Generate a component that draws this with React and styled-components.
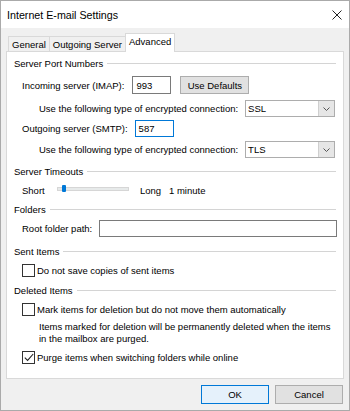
import React from "react";
import styled, { createGlobalStyle } from "styled-components";

const GlobalStyle = createGlobalStyle`
  html, body {
    margin: 0;
    padding: 0;
    background: #ffffff;
  }
  body {
    font-family: "Liberation Sans", Arial, sans-serif;
    font-size: 9.5px;
    color: #000;
  }
  * {
    box-sizing: border-box;
  }
`;

const Window = styled.div`
  width: 350px;
  height: 411px;
  border: 1px solid #aaaaaa;
  background: #f0f0f0;
  display: flex;
  flex-direction: column;
`;

const TitleBar = styled.div`
  height: 27px;
  background: #ffffff;
  display: flex;
  align-items: center;
  justify-content: space-between;
  padding: 0 7px 0 6px;
  font-size: 10.7px;
`;

const Body = styled.div`
  flex: 1;
  display: flex;
  flex-direction: column;
  padding: 0 5px;
`;

const TabStrip = styled.div`
  display: flex;
  align-items: flex-end;
  height: 18px;
  margin-top: 5px;
  padding-left: 2px;
  position: relative;
  z-index: 1;
`;

const Tab = styled.div`
  height: ${(p) => (p.$active ? "19px" : "15px")};
  margin-bottom: ${(p) => (p.$active ? "-1px" : "0")};
  padding: ${(p) => (p.$active ? "2px 3px 0" : "1px 3px 0")};
  background: ${(p) => (p.$active ? "#ffffff" : "#f0f0f0")};
  border: 1px solid #d9d9d9;
  border-bottom: none;
  margin-left: ${(p) => (p.$first ? "0" : "-1px")};
  display: flex;
  align-items: ${(p) => (p.$active ? "flex-start" : "center")};
  line-height: 12px;
`;

const Panel = styled.div`
  height: 328px;
  background: #ffffff;
  border: 1px solid #d9d9d9;
  padding: 3px 7px 0;
  display: flex;
  flex-direction: column;
`;

const Heading = styled.div`
  height: 16px;
  margin-top: ${(p) => p.$mt ?? 0}px;
  display: flex;
  align-items: center;
  gap: 4px;
  &::after {
    content: "";
    flex: 1;
    height: 1px;
    background: #d4d4d4;
  }
`;

const Row = styled.div`
  height: ${(p) => p.$h ?? 16}px;
  margin-top: ${(p) => p.$mt ?? 0}px;
  margin-left: ${(p) => p.$indent ?? 8}px;
  display: flex;
  align-items: center;
  gap: ${(p) => p.$gap ?? 7}px;
  white-space: nowrap;
`;

const TextBox = styled.div`
  width: ${(p) => (p.$w ? `${p.$w}px` : "auto")};
  flex: ${(p) => (p.$w ? "none" : "1")};
  height: ${(p) => p.$h ?? 17}px;
  border: 1px solid ${(p) => (p.$focus ? "#0078d7" : "#7a7a7a")};
  background: #fff;
  padding-left: 3px;
  display: flex;
  align-items: center;
  margin-right: ${(p) => (p.$w ? "0" : "-1px")};
`;

const Button = styled.div`
  width: ${(p) => p.$w ?? 68}px;
  height: ${(p) => p.$h ?? 19}px;
  background: ${(p) => (p.$default ? "#e5f1fb" : "#e1e1e1")};
  border: 1px solid ${(p) => (p.$default ? "#0078d7" : "#adadad")};
  display: flex;
  align-items: center;
  justify-content: center;
  margin-left: ${(p) => p.$ml ?? 0}px;
`;

const Select = styled.div`
  width: 90px;
  height: 17px;
  border: 1px solid #adadad;
  background: #fff;
  display: flex;
  align-items: stretch;
`;

const SelectValue = styled.div`
  flex: 1;
  display: flex;
  align-items: center;
  padding-left: 2px;
`;

const SelectArrow = styled.div`
  width: 16px;
  background: #e6e6e6;
  border-left: 1px solid #cfcfcf;
  display: flex;
  align-items: center;
  justify-content: center;
`;

const Label = styled.span`
  display: inline-block;
  flex: none;
  width: ${(p) => (p.$w ? `${p.$w}px` : "auto")};
`;

const Track = styled.div`
  flex: 0 0 72px;
  width: 72px;
  height: 4px;
  background: #e7eaea;
  border: 1px solid #d6d6d6;
  position: relative;
  margin: -2px 11px 0 0;
`;

const Thumb = styled.div`
  position: absolute;
  left: 4px;
  top: -3px;
  width: 4px;
  height: 7px;
  background: #0078d7;
  border-radius: 1px;
`;

const Check = styled.div`
  width: 13px;
  height: 13px;
  border: 1px solid #333333;
  background: #fff;
  display: flex;
  align-items: center;
  justify-content: center;
`;

const Note = styled.div`
  margin-top: 4px;
  margin-left: 25px;
  line-height: 12px;
  width: 300px;
`;

const Footer = styled.div`
  display: flex;
  justify-content: flex-end;
  gap: 6px;
  margin-top: 6px;
  padding-right: 1px;
`;

const Chevron = () => (
  <svg width="7" height="4" viewBox="0 0 7 4">
    <path d="M0.5 0.5 L3.5 3.5 L6.5 0.5" fill="none" stroke="#555" strokeWidth="1" />
  </svg>
);

const CloseIcon = () => (
  <svg width="10" height="10" viewBox="0 0 10 10">
    <path d="M0.5 0.5 L9.5 9.5 M9.5 0.5 L0.5 9.5" stroke="#222" strokeWidth="1" />
  </svg>
);

const Checkbox = ({ checked }) => (
  <Check>
    {checked && (
      <svg width="10" height="9" viewBox="0 0 10 9">
        <path d="M0.8 4.6 L3.6 7.4 L9.2 1" fill="none" stroke="#222" strokeWidth="1.1" />
      </svg>
    )}
  </Check>
);

export default function App() {
  return (
    <>
      <GlobalStyle />
      <Window>
        <TitleBar>
          <span>Internet E-mail Settings</span>
          <CloseIcon />
        </TitleBar>
        <Body>
          <TabStrip>
            <Tab $first>General</Tab>
            <Tab>Outgoing Server</Tab>
            <Tab $active>Advanced</Tab>
          </TabStrip>
          <Panel>
            <Heading>Server Port Numbers</Heading>
            <Row $h={18} $mt={5} $gap={8}>
              <span>Incoming server (IMAP):</span>
              <TextBox $w={39} $h={18}>993</TextBox>
              <Button $w={69} $h={18} $ml={1}>Use Defaults</Button>
            </Row>
            <Row $h={17} $mt={6} $indent={25}>
              <span>Use the following type of encrypted connection:</span>
              <Select>
                <SelectValue>SSL</SelectValue>
                <SelectArrow><Chevron /></SelectArrow>
              </Select>
            </Row>
            <Row $h={17} $mt={3}>
              <span>Outgoing server (SMTP):</span>
              <TextBox $w={39} $focus>587</TextBox>
            </Row>
            <Row $h={17} $mt={4} $indent={25}>
              <span>Use the following type of encrypted connection:</span>
              <Select>
                <SelectValue>TLS</SelectValue>
                <SelectArrow><Chevron /></SelectArrow>
              </Select>
            </Row>
            <Heading $mt={5}>Server Timeouts</Heading>
            <Row $mt={3} $gap={0}>
              <Label $w={35}>Short</Label>
              <Track>
                <Thumb />
              </Track>
              <Label $w={29}>Long</Label>
              <Label>1 minute</Label>
            </Row>
            <Heading $mt={3}>Folders</Heading>
            <Row $h={17} $mt={3}>
              <span>Root folder path:</span>
              <TextBox />
            </Row>
            <Heading $mt={6}>Sent Items</Heading>
            <Row $mt={3} $gap={2}>
              <Checkbox />
              <span>Do not save copies of sent items</span>
            </Row>
            <Heading $mt={4}>Deleted Items</Heading>
            <Row $mt={3} $gap={2}>
              <Checkbox />
              <span>Mark items for deletion but do not move them automatically</span>
            </Row>
            <Note>
              Items marked for deletion will be permanently deleted when the items in the mailbox are purged.
            </Note>
            <Row $mt={4} $gap={2}>
              <Checkbox checked />
              <span>Purge items when switching folders while online</span>
            </Row>
          </Panel>
          <Footer>
            <Button $default>OK</Button>
            <Button>Cancel</Button>
          </Footer>
        </Body>
      </Window>
    </>
  );
}
